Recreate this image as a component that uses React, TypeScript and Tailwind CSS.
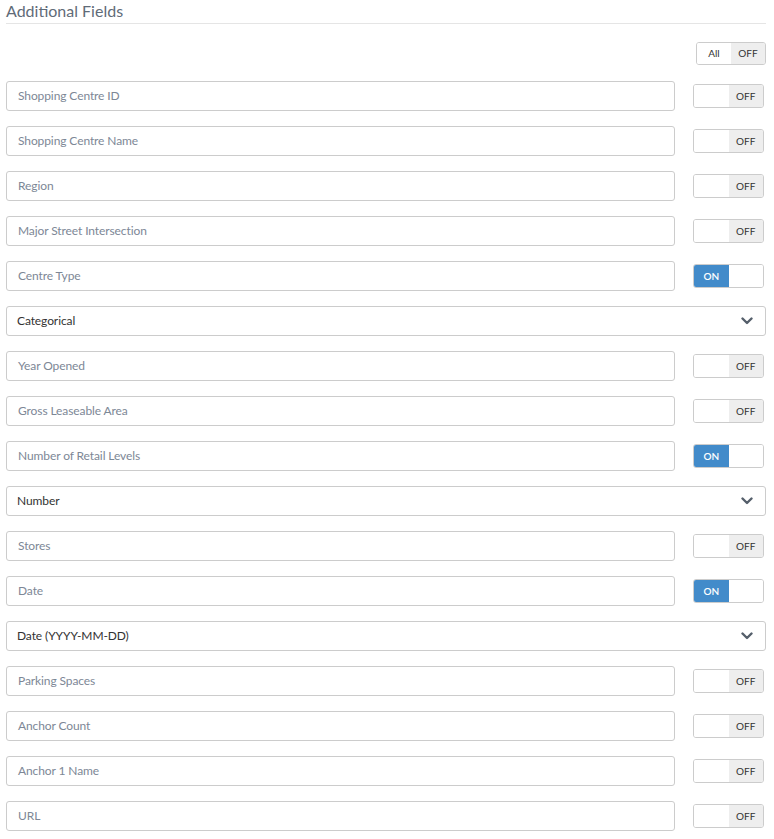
type Field = { label: string; on?: boolean; select?: string };

const fields: Field[] = [
  { label: "Shopping Centre ID" },
  { label: "Shopping Centre Name" },
  { label: "Region" },
  { label: "Major Street Intersection" },
  { label: "Centre Type", on: true, select: "Categorical" },
  { label: "Year Opened" },
  { label: "Gross Leaseable Area" },
  { label: "Number of Retail Levels", on: true, select: "Number" },
  { label: "Stores" },
  { label: "Date", on: true, select: "Date (YYYY-MM-DD)" },
  { label: "Parking Spaces" },
  { label: "Anchor Count" },
  { label: "Anchor 1 Name" },
  { label: "URL" },
];

function Toggle({ on }: { on?: boolean }) {
  return (
    <div className="flex h-[24px] w-[71px] shrink-0 overflow-hidden rounded-[3px] border border-[#cccccc] text-[10px] font-semibold">
      {on ? (
        <>
          <div className="flex flex-1 items-center justify-center bg-[#428bca] text-white">ON</div>
          <div className="flex-1 bg-white" />
        </>
      ) : (
        <>
          <div className="flex-1 bg-white" />
          <div className="flex flex-1 items-center justify-center bg-[#eeeeee] font-normal text-[#333333]">OFF</div>
        </>
      )}
    </div>
  );
}

function Chevron() {
  return (
    <svg width="12" height="8" viewBox="0 0 12 8" className="mr-[1px]">
      <path d="M1.5 1.5 L6 6 L10.5 1.5" fill="none" stroke="#555f6b" strokeWidth="2.4" strokeLinecap="round" strokeLinejoin="round" />
    </svg>
  );
}

export default function App() {
  return (
    <div className="bg-white pl-[6px] pr-[8px] font-['Lato','Liberation_Sans',sans-serif]">
      <div className="border-b border-[#e5e5e5] pb-[2px] text-[16px] leading-[21px] text-[#5f6b78]">
        Additional Fields
      </div>
      <div className="mt-[18px] flex justify-end">
        <div className="flex h-[23px] w-[70px] overflow-hidden rounded-[3px] border border-[#cccccc] text-[10px] text-[#333333]">
          <div className="flex flex-1 items-center justify-center bg-white">All</div>
          <div className="flex flex-1 items-center justify-center bg-[#eeeeee]">OFF</div>
        </div>
      </div>
      <div className="mt-[16px] flex flex-col gap-[15px]">
        {fields.map((f) => (
          <div key={f.label} className="flex flex-col gap-[15px]">
            <div className="flex items-center">
              <div className="flex h-[30px] w-[669px] items-center rounded-[3px] border border-[#cccccc] px-[11px] text-[12px] tracking-[-0.1px] text-[#7d8796]">
                {f.label}
              </div>
              <div className="ml-[18px]">
                <Toggle on={f.on} />
              </div>
            </div>
            {f.select && (
              <div className="flex h-[30px] items-center justify-between rounded-[3px] border border-[#cccccc] pl-[10px] pr-[11px] text-[12px] tracking-[-0.1px] text-[#333333]">
                <span>{f.select}</span>
                <Chevron />
              </div>
            )}
          </div>
        ))}
      </div>
    </div>
  );
}
